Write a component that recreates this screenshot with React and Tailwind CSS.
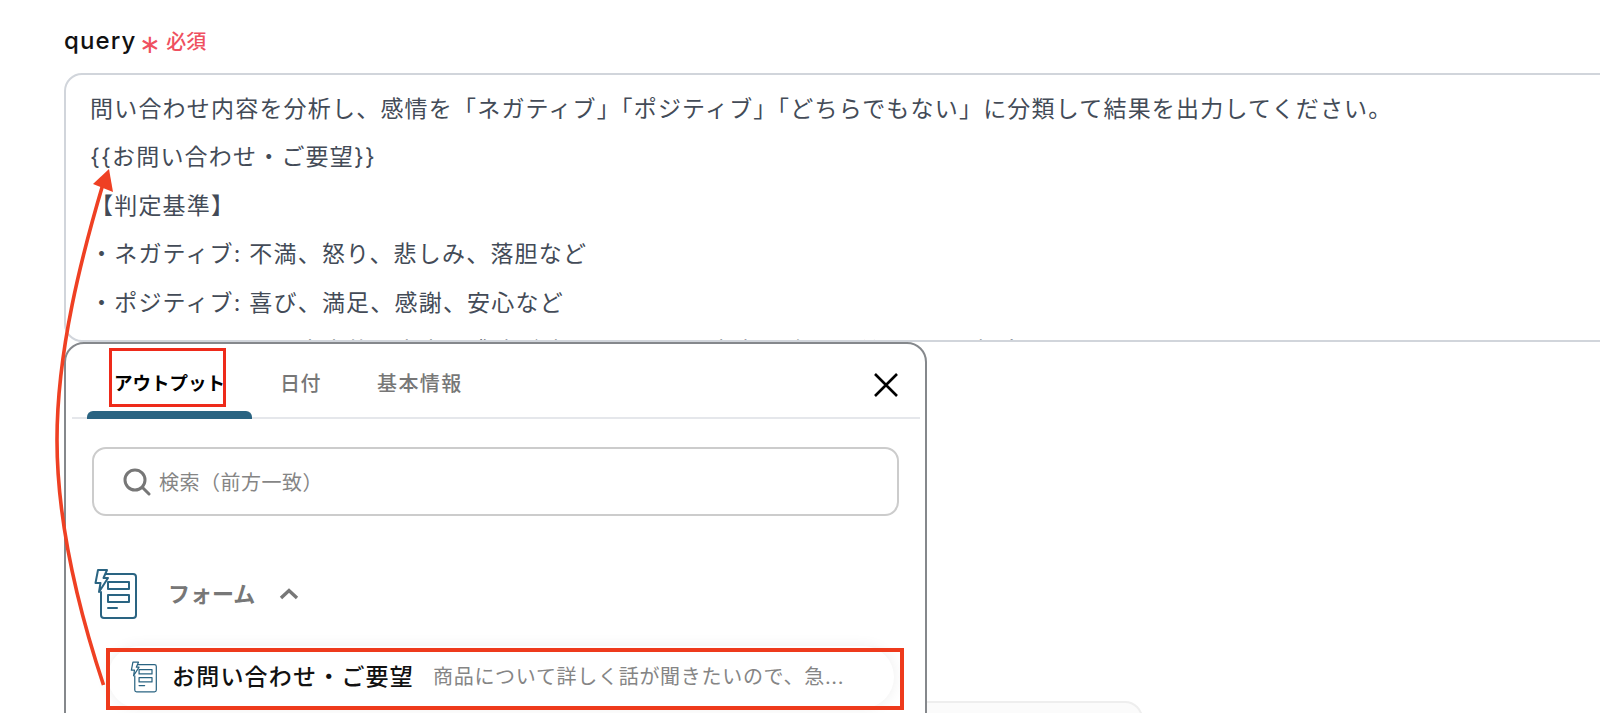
const jp = "font-['Inter','Noto_Sans_CJK_JP',sans-serif]";

function FormIcon({ className }) {
  return (
    <svg viewBox="0 0 44 52" fill="none" stroke="#2a6482" strokeWidth="2" strokeLinejoin="round" strokeLinecap="round" className={className}>
      <path d="M11 6 H39 Q42 6 42 9 V47 Q42 50 39 50 H10 Q7 50 7 47 V24" />
      <rect x="14" y="14" width="21" height="7" fill="#fff" />
      <rect x="14" y="27" width="21" height="7" fill="#fff" />
      <path d="M14 40 H23" />
      <path d="M4 2 H13 L9.5 10 H14 L5 24 L6.5 15 H1.5 Z" fill="#fff" />
    </svg>
  );
}

const lines = [
  "問い合わせ内容を分析し、感情を「ネガティブ」「ポジティブ」「どちらでもない」に分類して結果を出力してください。",
  "{{お問い合わせ・ご要望}}",
  "【判定基準】",
  "・ネガティブ: 不満、怒り、悲しみ、落胆など",
  "・ポジティブ: 喜び、満足、感謝、安心など",
  "・どちらでもない: 中立的な内容、感情が読み取れない、事実の確認や質問のみの場合など",
];

export default function App() {
  return (
    <div className={`relative w-[1600px] h-[713px] overflow-hidden bg-white ${jp}`}>
      <div className="pl-[64px] pt-[24px]">
        <div className="flex items-center h-[34px]">
          <span className="text-[24px] leading-[34px] font-medium tracking-[1.1px] text-[#111]">query</span>
          <span className="ml-[3px] mt-[6px] text-[26px] leading-[26px] text-[#ef5060]">∗</span>
          <span className="ml-[5px] mt-[2px] text-[20px] leading-[34px] font-medium text-[#ef5060]">必須</span>
        </div>
        <div className="mt-[15px] w-[1600px] h-[269px] overflow-hidden rounded-[18px] border-2 border-[#d1d5db] pl-[24px] pt-[10px] text-[#434b57] text-[23px] leading-[48.4px] tracking-[1.2px]">
          {lines.map((t) => (
            <p key={t} className="whitespace-nowrap">{t}</p>
          ))}
        </div>
        <div className="mt-[359px] w-[1079px] h-[60px] rounded-[18px] border-2 border-[#eeeeee] bg-[#fbfbfb]" />
      </div>

      <div className="absolute left-[64px] top-[342px] w-[863px] h-[420px] rounded-[20px] border-2 border-[#85888c] bg-white pl-[6px] pr-[5px]">
        <div className="relative h-[75px] border-b-2 border-[#e5e7eb] flex items-center pt-[7px]">
          <div className="ml-[15px] w-[165px] self-stretch relative flex items-center justify-center">
            <span className="text-[18.5px] font-bold text-[#000] whitespace-nowrap">アウトプット</span>
            <div className="absolute left-0 right-0 bottom-[-2px] h-[8px] rounded-t-[6px] bg-[#2a6482]" />
          </div>
          <span className="ml-[28px] text-[20px] font-medium tracking-[0.5px] text-[#777]">日付</span>
          <span className="ml-[56px] text-[20px] font-medium tracking-[1.4px] text-[#777]">基本情報</span>
          <svg viewBox="0 0 26 26" fill="none" stroke="#000" strokeWidth="2.6" className="absolute right-[21px] top-[28px] w-[26px] h-[26px]">
            <path d="M2 2 L24 24 M24 2 L2 24" />
          </svg>
        </div>
        <div className="mt-[28px] ml-[20px] w-[807px] h-[69px] rounded-[14px] border-2 border-[#cccccc] flex items-center pl-[29px] pt-[1px]">
          <svg viewBox="0 0 28 28" fill="none" stroke="#777" strokeWidth="3" className="w-[28px] h-[28px]">
            <circle cx="12" cy="12" r="10" />
            <path d="M19.5 19.5 L26 26" strokeLinecap="round" />
          </svg>
          <span className="ml-[8px] mt-[2px] text-[20px] tracking-[0.5px] text-[#858585]">検索（前方一致）</span>
        </div>
        <div className="mt-[52px] ml-[22px] flex items-center">
          <FormIcon className="w-[44px] h-[52px]" />
          <span className="ml-[30px] text-[22px] font-bold text-[#777]">フォーム</span>
          <svg viewBox="0 0 20 12" fill="none" stroke="#777" strokeWidth="3.4" className="ml-[24px] w-[20px] h-[12px]">
            <path d="M2 10 L10 2.5 L18 10" />
          </svg>
        </div>
        <div className="mt-[26px] ml-[36px] w-[786px] h-[62px] rounded-full bg-white shadow-[0_0_14px_rgba(0,0,0,0.07)] flex items-center pl-[22px]">
          <FormIcon className="w-[28px] h-[32px]" />
          <span className="ml-[14px] text-[23px] font-medium tracking-[1.2px] text-[#111] whitespace-nowrap">お問い合わせ・ご要望</span>
          <span className="ml-[19px] text-[20px] tracking-[0.7px] text-[#858585] whitespace-nowrap">商品について詳しく話が聞きたいので、急...</span>
        </div>
      </div>

      <div className="absolute left-[109px] top-[348px] w-[117px] h-[59px] border-[3px] border-[#ee2a1a]" />
      <div className="absolute left-[106px] top-[648px] w-[798px] h-[62px] border-[4px] border-[#ee3a1c]" />

      <svg viewBox="0 0 1600 713" fill="none" className="absolute left-0 top-0 w-[1600px] h-[713px] pointer-events-none">
        <path d="M103.5 685 C 72 590, 57 510, 57 440 C 57 350, 82 255, 103 184" stroke="#ef4023" strokeWidth="3.6" />
        <path d="M109 169 L93 184 L113 192 Z" fill="#ef4023" />
      </svg>
    </div>
  );
}
